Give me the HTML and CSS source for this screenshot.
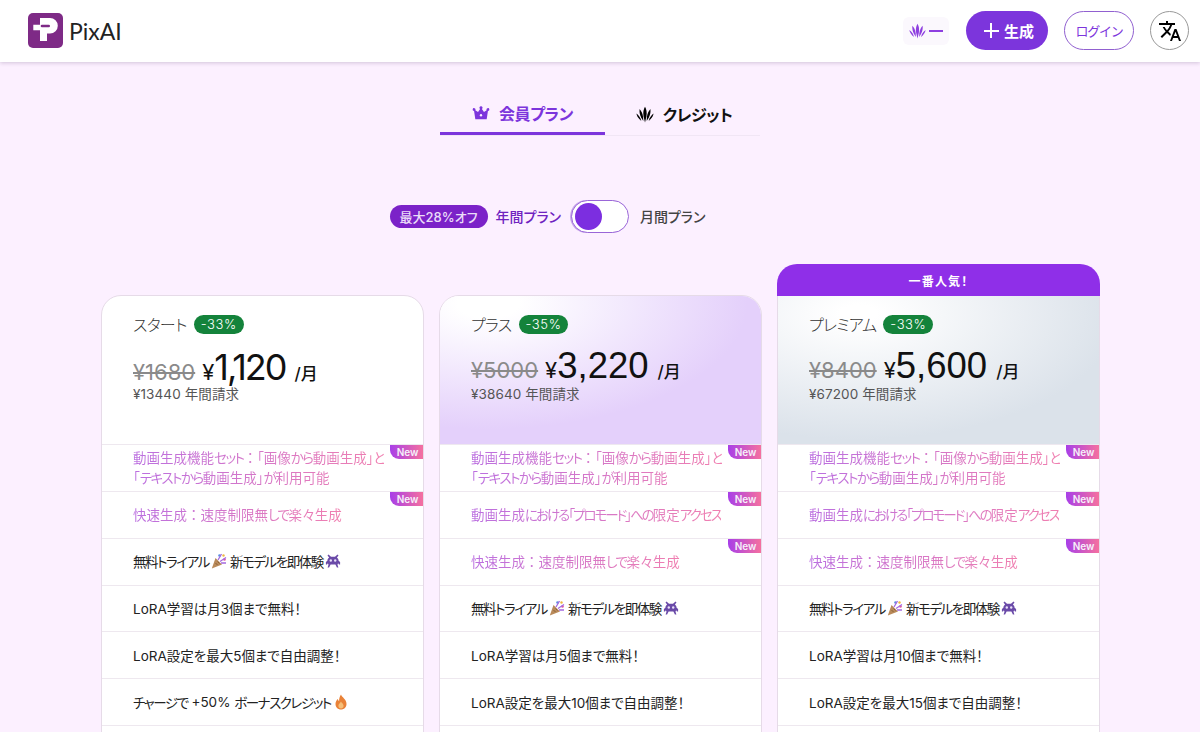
FILE: index.html
```html
<!DOCTYPE html>
<html lang="ja">

<head>
    <meta charset="UTF-8">
    <meta name="viewport" content="width=device-width, initial-scale=1.0">
    <title>PixAI</title>
    <link rel="stylesheet" href="styles.css">
</head>

<body>
<svg class="defs" width="0" height="0">
    <symbol id="feather" viewBox="0 0 20 20">
        <path d="M10 2c1.700 2.800 2.300 6.500 1.600 10.500L10 19.500l-1.600-7C7.700 8.500 8.300 4.800 10 2z"/>
        <path d="M10 3.500c1.300 2.800 1.700 6 1.100 9.500L10 17.500 8.900 13C8.300 9.500 8.700 6.300 10 3.500z" transform="rotate(-17 10 24)"/>
        <path d="M10 3.500c1.300 2.800 1.700 6 1.100 9.500L10 17.500 8.900 13C8.300 9.500 8.700 6.300 10 3.500z" transform="rotate(17 10 24)"/>
        <path d="M10 6.500c.9 2.200 1.100 4.500.7 7L10 16.500l-.7-3C8.900 11 9.100 8.700 10 6.500z" transform="rotate(-33 10 24)"/>
        <path d="M10 6.500c.9 2.200 1.100 4.500.7 7L10 16.500l-.7-3C8.900 11 9.100 8.700 10 6.500z" transform="rotate(33 10 24)"/>
    </symbol>
    <symbol id="party" viewBox="0 0 16 16">
        <path d="M4.500 5l6.500 6.500L.8 15.500z" fill="#b98a5a"/>
        <path d="M6.500 8.500l2 2M4.500 10l2 2" stroke="#8a6238" stroke-width="1"/>
        <circle cx="8.500" cy="2.500" r="1.300" fill="#5b8fe0"/>
        <circle cx="13.500" cy="6.500" r="1.300" fill="#e05b9c"/>
        <path d="M7 7l3.500-6M9 8.500l6-4M10 10l5 0" stroke="#a46ae0" stroke-width="1.300" fill="none"/>
        <circle cx="12.500" cy="2.500" r="1.200" fill="#f0b840"/>
    </symbol>
    <symbol id="alien" viewBox="0 0 16 16">
        <path d="M3.500 1.500l2.500 2.300h4l2.500-2.300 1 1-1.600 2c1.100.8 1.700 2 1.700 3.200l1.500 1.300v2.500h-1.100l-.9-1.300-.6 1.500.9 2.800h-1.500l-1.500-3H5.600l-1.500 3H2.600l.9-2.800-.6-1.500-.9 1.300H.9V9L2.400 7.700c0-1.200.6-2.400 1.700-3.200l-1.600-2z" fill="#6a4aa8"/>
        <circle cx="5.800" cy="7.500" r="1.200" fill="#e8e0f8"/>
        <circle cx="10.200" cy="7.500" r="1.200" fill="#e8e0f8"/>
    </symbol>
    <symbol id="fire" viewBox="0 0 16 16">
        <path d="M8 .5c.6 2.600 5.500 4.600 5.500 9.500 0 3.400-2.500 5.500-5.500 5.500S2.500 13.400 2.500 10c0-2.400 1.300-4 2.300-5 .2 1.100.7 1.800 1.300 2.200C5.900 4.800 6.700 2.400 8 .5z" fill="#e98238"/>
        <path d="M8 7.500c.4 1.300 2.600 2.200 2.600 4.300 0 1.700-1.200 2.700-2.600 2.700s-2.600-1-2.600-2.700C5.400 9.800 7.400 9.100 8 7.500z" fill="#f6bf78"/>
    </symbol>
</svg>

<header class="topbar">
    <div class="brand">
        <svg class="brand-logo" viewBox="0 0 35 35">
            <rect width="35" height="35" rx="5" fill="#7e2a86"/>
            <path d="M12 5h10a7.800 7.800 0 0 1 0 15.600h-3V28h-7V17.300H5.300V11.700H12z" fill="#fff"/>
            <rect x="12.700" y="11.700" width="9.300" height="2.600" rx="1.300" fill="#7e2a86"/>
        </svg>
        <span class="brand-name">PixAI</span>
    </div>
    <div class="actions">
        <div class="credit">
            <svg class="credit-icon"><use href="#feather"/></svg>
            <span class="credit-dash"></span>
        </div>
        <button class="btn-generate"><span class="plus"></span>生成</button>
        <button class="btn-login">ログイン</button>
        <button class="btn-lang">
            <svg viewBox="0 0 24 24" width="24" height="24"><path d="M12.870 15.070l-2.540-2.510.03-.03c1.740-1.940 2.980-4.170 3.710-6.530H17V4h-7V2H8v2H1v1.990h11.170C11.500 7.920 10.440 9.750 9 11.350 8.070 10.320 7.300 9.190 6.690 8h-2c.73 1.630 1.730 3.170 2.980 4.560l-5.090 5.020L4 19l5-5 3.110 3.110.76-2.040zM18.500 10h-2L12 22h2l1.120-3h4.750L21 22h2l-4.500-12zm-2.620 7l1.620-4.330L19.120 17h-3.240z"/></svg>
        </button>
    </div>
</header>

<main class="page">
    <nav class="tabs">
        <a class="tab tab-active">
            <svg class="tab-icon" viewBox="0 0 20 20"><path d="M10 2.500a1.700 1.700 0 0 1 1 3.100l2.300 3.400 3-2.100a1.600 1.600 0 1 1 1.400.8L16.300 17H3.700L2.300 7.700a1.600 1.600 0 1 1 1.400-.8l3 2.100L9 5.600a1.700 1.700 0 0 1 1-3.100z" fill="#7c35dc"/><circle cx="10" cy="12.500" r="1.300" fill="#fcf0ff"/></svg>
            会員プラン
        </a>
        <a class="tab tab-credit">
            <svg class="tab-icon"><use href="#feather"/></svg>
            クレジット
        </a>
    </nav>

    <div class="billing">
        <span class="discount">最大28%オフ</span>
        <span class="billing-year">年間プラン</span>
        <span class="switch"><span class="knob"></span></span>
        <span class="billing-month">月間プラン</span>
    </div>

    <section class="plans">
        <article class="plan">
            <div class="plan-head">
                <div class="plan-title"><span>スタート</span><span class="off">-33%</span></div>
                <div class="price"><s>¥1680</s><span class="yen">¥</span><span class="amount amount-tight">1,120</span><span class="per">/月</span></div>
                <div class="yearly">¥13440 年間請求</div>
            </div>
            <ul class="features">
                <li class="new"><span class="grad">動画生成機能<span class="k">セット</span><span class="fw">：</span>「画像<span class="k">から</span>動画生成」<span class="k">と</span><br>「<span class="k">テキストから</span>動画生成」<span class="k">が</span>利用可能</span><b class="new-tag">New</b></li>
                <li class="new"><span class="grad">快速生成<span class="fw">：</span>速度制限無<span class="k">しで</span>楽々生成</span><b class="new-tag">New</b></li>
                <li><span class="k">無料トライアル</span><svg class="emoji"><use href="#party"/></svg><span class="k">新モデルを即体験</span><svg class="emoji"><use href="#alien"/></svg></li>
                <li>LoRA学習は月3個まで無料！</li>
                <li>LoRA設定を最大5個まで自由調整！</li>
                <li><span class="k">チャージで</span>&nbsp;+50%&nbsp;<span class="k">ボーナスクレジット</span><svg class="emoji emoji-end"><use href="#fire"/></svg></li>
                <li></li>
            </ul>
        </article>

        <article class="plan">
            <div class="plan-head head-plus">
                <div class="plan-title"><span>プラス</span><span class="off">-35%</span></div>
                <div class="price"><s>¥5000</s><span class="yen">¥</span><span class="amount">3,220</span><span class="per">/月</span></div>
                <div class="yearly">¥38640 年間請求</div>
            </div>
            <ul class="features">
                <li class="new"><span class="grad">動画生成機能<span class="k">セット</span><span class="fw">：</span>「画像<span class="k">から</span>動画生成」<span class="k">と</span><br>「<span class="k">テキストから</span>動画生成」<span class="k">が</span>利用可能</span><b class="new-tag">New</b></li>
                <li class="new"><span class="grad">動画生成<span class="k k-pro">における「プロモード」への</span>限定<span class="k k-pro">アクセス</span></span><b class="new-tag">New</b></li>
                <li class="new"><span class="grad">快速生成<span class="fw">：</span>速度制限無<span class="k">しで</span>楽々生成</span><b class="new-tag">New</b></li>
                <li><span class="k">無料トライアル</span><svg class="emoji"><use href="#party"/></svg><span class="k">新モデルを即体験</span><svg class="emoji"><use href="#alien"/></svg></li>
                <li>LoRA学習は月5個まで無料！</li>
                <li>LoRA設定を最大10個まで自由調整！</li>
                <li></li>
            </ul>
        </article>

        <article class="plan plan-top">
            <div class="ribbon">一番人気！</div>
            <div class="plan-head head-premium">
                <div class="plan-title"><span>プレミアム</span><span class="off">-33%</span></div>
                <div class="price"><s>¥8400</s><span class="yen">¥</span><span class="amount">5,600</span><span class="per">/月</span></div>
                <div class="yearly">¥67200 年間請求</div>
            </div>
            <ul class="features">
                <li class="new"><span class="grad">動画生成機能<span class="k">セット</span><span class="fw">：</span>「画像<span class="k">から</span>動画生成」<span class="k">と</span><br>「<span class="k">テキストから</span>動画生成」<span class="k">が</span>利用可能</span><b class="new-tag">New</b></li>
                <li class="new"><span class="grad">動画生成<span class="k k-pro">における「プロモード」への</span>限定<span class="k k-pro">アクセス</span></span><b class="new-tag">New</b></li>
                <li class="new"><span class="grad">快速生成<span class="fw">：</span>速度制限無<span class="k">しで</span>楽々生成</span><b class="new-tag">New</b></li>
                <li><span class="k">無料トライアル</span><svg class="emoji"><use href="#party"/></svg><span class="k">新モデルを即体験</span><svg class="emoji"><use href="#alien"/></svg></li>
                <li>LoRA学習は月10個まで無料！</li>
                <li>LoRA設定を最大15個まで自由調整！</li>
                <li></li>
            </ul>
        </article>
    </section>
</main>
</body>

</html>
```

FILE: styles.css
```css
/* Page */
* {
    box-sizing: border-box;
}

html,
body {
    height: 732px;
    overflow: hidden;
}

body {
    margin: 0;
    background-color: #fcf0ff;
    color: #111;
    font-family: Inter, "Noto Sans CJK JP", sans-serif;
    font-feature-settings: "palt";
}

.defs {
    position: absolute;
}

/* Top bar */
.topbar {
    height: 62px;
    padding: 0 11px 1px 28px;
    display: flex;
    align-items: center;
    justify-content: space-between;
    background-color: #fff;
    box-shadow: 0 1px 4px rgba(60, 30, 80, 0.22);
}

.brand {
    display: flex;
    align-items: center;
    gap: 6px;
}

.brand-logo {
    width: 35px;
    height: 35px;
}

.brand-name {
    font-family: Lato, sans-serif;
    font-size: 23px;
    color: #222;
}

.actions {
    display: flex;
    align-items: center;
}

.credit {
    width: 46px;
    height: 28px;
    margin-right: 17px;
    display: flex;
    align-items: center;
    justify-content: center;
    gap: 3px;
    background-color: #fbf8fd;
    border-radius: 6px;
}

.credit-icon {
    width: 17px;
    height: 17px;
    fill: #8e3fe0;
}

.credit-dash {
    width: 14px;
    height: 2px;
    background-color: #8e3fe0;
}

.btn-generate {
    width: 82px;
    height: 39px;
    margin-right: 16px;
    padding: 0 0 0 4px;
    display: flex;
    align-items: center;
    justify-content: center;
    gap: 5px;
    border: none;
    border-radius: 20px;
    background-color: #7c35dc;
    color: #fff;
    font-family: inherit;
    font-size: 15px;
    font-weight: 700;
}

.plus {
    width: 15px;
    height: 15px;
    background:
        linear-gradient(#fff, #fff) center / 15px 2px no-repeat,
        linear-gradient(#fff, #fff) center / 2px 15px no-repeat;
}

.btn-login {
    width: 70px;
    height: 39px;
    margin-right: 16px;
    padding: 0;
    border: 1px solid #9160d0;
    border-radius: 20px;
    background-color: #fff;
    color: #7c35dc;
    font-family: inherit;
    font-size: 13px;
    letter-spacing: -1.200px;
}

.btn-lang {
    width: 39px;
    height: 39px;
    padding: 0;
    display: flex;
    align-items: center;
    justify-content: center;
    border: 1px solid #999;
    border-radius: 50%;
    background-color: #fff;
}

/* Tabs */
.tabs {
    width: 320px;
    height: 74px;
    margin: 0 auto;
    padding-top: 26px;
    display: flex;
    border-bottom: 1px solid #f1e6f5;
}

.tab {
    width: 155px;
    height: 47px;
    display: flex;
    align-items: center;
    justify-content: center;
    gap: 9px;
    padding-top: 5px;
    color: #111;
    font-size: 16px;
    font-weight: 700;
    letter-spacing: -0.400px;
}

.tab-active {
    width: 165px;
    border-bottom: 3px solid #7c35dc;
    color: #7c35dc;
}

.tab-credit {
    padding-left: 3px;
}

.tab-icon {
    width: 18px;
    height: 18px;
}

/* Monthly / yearly switch */
.billing {
    margin-top: 63px;
    height: 34px;
    padding-right: 105px;
    display: flex;
    align-items: center;
    justify-content: center;
    font-size: 14px;
    font-weight: 500;
}

.discount {
    height: 23px;
    padding: 0 10px;
    display: flex;
    align-items: center;
    border-radius: 12px;
    background-color: #7b22c8;
    color: #eadcf8;
    font-size: 13px;
}

.billing-year {
    margin: 0 10px 0 8px;
    color: #6f22c0;
}

.switch {
    width: 58px;
    height: 33px;
    padding: 2px 0 0 3px;
    border: 1.500px solid #9a66d8;
    border-radius: 17px;
    background-color: #fff;
    box-shadow: -1px 0 0 #c9a8ec;
}

.knob {
    display: block;
    width: 27px;
    height: 27px;
    border-radius: 50%;
    background-color: #7c2ee0;
}

.billing-month {
    margin-left: 11px;
    color: #444;
}

/* Plan cards */
.plans {
    margin-top: 62px;
    padding-left: 101px;
    display: flex;
    gap: 15px;
    align-items: flex-start;
}

.plan {
    position: relative;
    width: 323px;
    border: 1px solid #e6dbe8;
    border-radius: 20px;
    background-color: #fff;
}

.plan-top {
    border-top: none;
    border-radius: 0 0 20px 20px;
    margin-top: 1px;
}

.ribbon {
    position: absolute;
    left: -1px;
    right: -1px;
    top: -32px;
    height: 32px;
    padding-top: 1px;
    display: flex;
    align-items: center;
    justify-content: center;
    border-radius: 20px 20px 0 0;
    background-color: #8f2fe8;
    color: #fff;
    font-size: 12px;
    font-weight: 700;
    letter-spacing: 1.200px;
}

.plan-head {
    height: 148px;
    padding: 18px 0 0 31px;
    border-radius: 19px 19px 0 0;
}

.plan-top .plan-head {
    border-radius: 0;
}

.head-plus {
    background: radial-gradient(ellipse 95% 100% at 15% 5%, #fff 10%, #e4d0fb 85%);
}

.head-premium {
    background: radial-gradient(ellipse 95% 100% at 25% 12%, #fff 6%, #dbe2ea 85%);
}

.plan-title {
    display: flex;
    align-items: center;
    gap: 7px;
    height: 20px;
    color: #333;
    font-size: 16px;
    font-weight: 300;
    letter-spacing: -0.700px;
}

.off {
    height: 19px;
    padding: 0 7px;
    display: flex;
    align-items: center;
    border-radius: 10px;
    background-color: #14833b;
    color: #fff;
    font-size: 13px;
    font-weight: 300;
    letter-spacing: 0.600px;
}

.price {
    margin-top: 11px;
    height: 40px;
    display: flex;
    align-items: baseline;
    white-space: nowrap;
}

.price s {
    margin-right: 7px;
    color: #8a8a8a;
    font-size: 22px;
}

.yen {
    font-size: 22px;
}

.amount {
    font-family: "Liberation Sans", sans-serif;
    font-size: 36.500px;
}

.amount-tight {
    font-family: Inter, sans-serif;
    font-size: 36px;
    letter-spacing: -2px;
}

.per {
    margin-left: 9px;
    font-size: 17px;
    font-weight: 500;
}

.yearly {
    margin-top: -2px;
    color: #555;
    font-size: 13.500px;
    letter-spacing: 0.100px;
}

/* Feature rows */
.features {
    margin: 0;
    padding: 0;
    list-style: none;
}

.features li {
    position: relative;
    height: 46.850px;
    padding: 0 0 1px 31px;
    display: flex;
    align-items: center;
    border-top: 1px solid #eee8ef;
    color: #222;
    font-size: 13.500px;
    white-space: nowrap;
}

.features li.new {
    padding-bottom: 0;
}

/* kana sets narrower than kanji in the original font */
.k {
    letter-spacing: -1.450px;
}

.k-pro {
    letter-spacing: -2px;
}

.fw {
    font-feature-settings: normal;
}

.grad {
    background: linear-gradient(90deg, #bb6fe0, #f07fb0);
    -webkit-background-clip: text;
    background-clip: text;
    color: transparent;
    line-height: 20px;
}

.new-tag {
    position: absolute;
    top: 0;
    right: 0;
    width: 33px;
    height: 14px;
    padding-left: 2px;
    display: flex;
    align-items: center;
    justify-content: center;
    border-radius: 0 0 0 9px;
    background: linear-gradient(90deg, #a83fe8, #f5709f);
    color: #f6f0fa;
    font-size: 10px;
    font-weight: 600;
}

.emoji {
    width: 16px;
    height: 16px;
    margin: 0 3px 0 2px;
}

.emoji-end {
    margin-left: 2px;
}
```
